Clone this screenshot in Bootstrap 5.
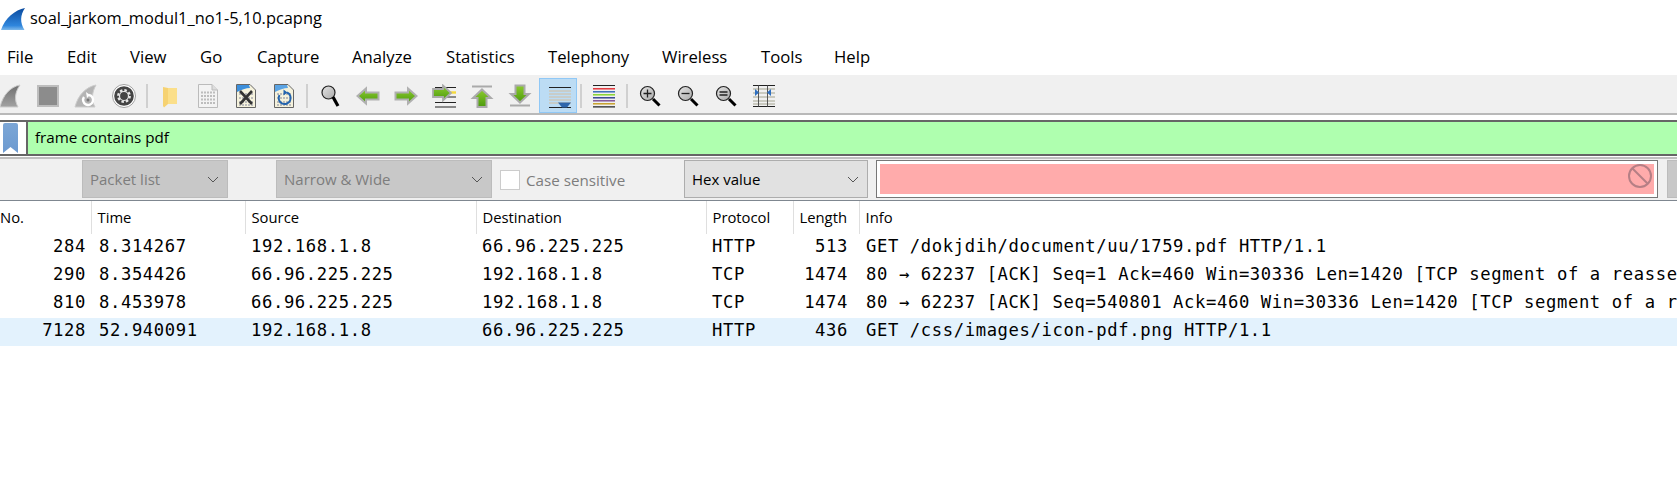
<!DOCTYPE html>
<html lang="en">
<head>
  <meta charset="UTF-8">
  <title>soal_jarkom_modul1_no1-5,10.pcapng</title>
  <meta name="viewport" content="width=device-width, initial-scale=1" />
  <link href="https://cdn.jsdelivr.net/npm/bootstrap@5.3.0/dist/css/bootstrap.min.css" rel="stylesheet">
  <style>
    html, body { height: 100%; }
    body { background: #fff; overflow: hidden; font-family: "Open Sans", "Liberation Sans", sans-serif; color: #000; }
    .ws-title { height: 37px; font-size: 16.4px; }
    .ws-title svg { margin-left: 1px; margin-right: 5px; }
    .ws-menu { height: 38px; font-size: 16.7px; padding: 2px 0 0 7px; }
    .ws-menu span { white-space: nowrap; }
    .ws-menu span:nth-child(1) { width: 60px; }
    .ws-menu span:nth-child(2) { width: 63px; }
    .ws-menu span:nth-child(3) { width: 70px; }
    .ws-menu span:nth-child(4) { width: 57px; }
    .ws-menu span:nth-child(5) { width: 95px; }
    .ws-menu span:nth-child(6) { width: 94px; }
    .ws-menu span:nth-child(7) { width: 102px; }
    .ws-menu span:nth-child(8) { width: 114px; }
    .ws-menu span:nth-child(9) { width: 99px; }
    .ws-menu span:nth-child(10) { width: 73px; }
    .ws-tools { height: 40px; padding-top: 3px; background: #f0f0f0; border-bottom: 2px solid #b9b9b9; margin-left: -9px; }
    .ws-tool { width: 38px; height: 35px; flex: none; }
    .ws-tool-on { background: #bcdcf4; border: 1px solid #90c8f6; }
    .ws-sep { width: 8px; flex: none; }
    .ws-sep::before { content: ""; width: 2px; height: 24px; background: #d0d0d0; display: block; margin: 0 auto; }
    .ws-filter { margin-top: 5px; height: 36px; border-top: 2px solid #666; border-bottom: 2px solid #666; }
    .ws-mark { width: 28px; flex: none; background: #fff; border-right: 2px solid #666; padding-left: 2px; }
    .ws-filter-text { background: #afffaf; padding: 0 0 1px 7px; font-size: 15.2px; }
    .ws-find { height: 44px; margin-top: 1px; padding: 1px 0 0 82px; background: #f0f0f0; border-top: 2px solid #c0c0c0; border-bottom: 1px solid #7f8790; font-size: 15.2px; overflow: hidden; }
    .ws-find .form-select { height: 38px; padding: 0 24px 0 7px; font-size: 15px; border-radius: 0; border: 1px solid #adadad; background-color: #e1e1e1; color: #000; font-family: inherit; flex: none; background-size: 12px 12px; background-position: right 8px center;
      background-image: url("data:image/svg+xml,%3csvg xmlns='http://www.w3.org/2000/svg' viewBox='0 0 12 12'%3e%3cpath fill='none' stroke='%23555' d='M1 4l5 5 5-5'/%3e%3c/svg%3e"); }
    .ws-find .form-select:disabled { background-color: #c8c8c8; color: #7d7d7d; border-color: #bcbcbc; opacity: 1; }
    .ws-pick-list { width: 146px; margin-right: 48px; }
    .ws-pick-match { width: 216px; }
    .ws-pick-hex { width: 184px; }
    .ws-check { width: 20px; height: 20px; margin: 0 6px 0 8px; border-radius: 0 !important; border: 1px solid #ccc; opacity: 1 !important; flex: none; }
    .ws-case { color: #7d7d7d; width: 158px; flex: none; }
    .ws-search { width: 782px; flex: none; margin: 0 9px 0 8px; height: 38px; padding: 3px; background: #fff; border: 1px solid #777; }
    .ws-search-in { background: #ffabab; height: 30px; padding-right: 2px; }
    .ws-find-btn { width: 40px; height: 38px; flex: none; background: #c8c8c8; border: 1px solid #bcbcbc; }
    .ws-packets { table-layout: fixed; width: 1677px; margin: 0; }
    .ws-packets th, .ws-packets td { padding: 0; border: 0; white-space: nowrap; overflow: hidden; color: #000; box-shadow: none; }
    .ws-packets th { height: 33px; font-weight: 400; font-size: 14.8px; padding-left: 6px; border-right: 1px solid #dfdfdf; vertical-align: middle; }
    .ws-packets th:first-child { padding-left: 0; }
    .ws-packets th:nth-child(1) { width: 91px; }
    .ws-packets th:nth-child(2) { width: 154px; }
    .ws-packets th:nth-child(3) { width: 231px; }
    .ws-packets th:nth-child(4) { width: 230px; }
    .ws-packets th:nth-child(5) { width: 87px; }
    .ws-packets th:nth-child(6) { width: 66px; }
    .ws-packets td { height: 28px; padding: 0 0 3px 6px; font-family: "DejaVu Sans Mono", "Liberation Mono", monospace; font-size: 17.2px; line-height: 1.25; letter-spacing: .62px; vertical-align: middle; }
    .ws-packets td:nth-child(2) { padding-left: 8px; }
    .ws-packets td:nth-child(7) { padding-left: 7px; }
    .ws-packets td.ws-num { text-align: right; padding: 0 5px 3px 0; }
    .ws-packets td.ws-len { text-align: right; padding: 0 11px 3px 0; }
    .ws-packets tr.ws-sel td { background: #e3f2fd; }
  </style>
</head>
<body>
  <svg width="0" height="0" class="position-absolute">
    <defs>
      <linearGradient id="gBlue" x1="0" y1="0" x2="0" y2="1"><stop offset="0" stop-color="#0a4a9e"/><stop offset=".8" stop-color="#2f86dd"/><stop offset="1" stop-color="#7db8ea"/></linearGradient>
      <linearGradient id="gGrey" x1="0" y1="0" x2="0" y2="1"><stop offset="0" stop-color="#6f6f6f"/><stop offset="1" stop-color="#a2a2a2"/></linearGradient>
      <linearGradient id="gGreen" x1="0" y1="0" x2="0" y2="1"><stop offset="0" stop-color="#8ccb2e"/><stop offset="1" stop-color="#4b9a0c"/></linearGradient>
      <linearGradient id="gLens" x1="0" y1="0" x2="1" y2="1"><stop offset="0" stop-color="#e4e4e4"/><stop offset="1" stop-color="#aaa"/></linearGradient>
      <linearGradient id="gMark" x1="0" y1="0" x2="0" y2="1"><stop offset="0" stop-color="#7ba6d6"/><stop offset="1" stop-color="#6d9ad0"/></linearGradient>
    </defs>
  </svg>

  <div class="ws-title d-flex align-items-center">
    <svg width="24" height="24" viewBox="0 0 24 24"><path d="M24 1C14 3 4 11 0 23H23.500C19 16 19 8 24 1Z" fill="url(#gBlue)"/></svg>
    <span>soal_jarkom_modul1_no1-5,10.pcapng</span>
  </div>

  <div class="ws-menu d-flex align-items-center">
    <span>File</span><span>Edit</span><span>View</span><span>Go</span><span>Capture</span><span>Analyze</span><span>Statistics</span><span>Telephony</span><span>Wireless</span><span>Tools</span><span>Help</span>
  </div>

  <div class="ws-tools d-flex">
    <div class="ws-tool d-flex align-items-center justify-content-center"><svg width="24" height="24" viewBox="0 0 24 24"><path d="M22 1C12 3 5 11 2 23H20C16 16 17 8 22 1Z" fill="url(#gGrey)" stroke="#ccc"/></svg></div>
    <div class="ws-tool d-flex align-items-center justify-content-center"><svg width="24" height="24" viewBox="0 0 24 24"><rect x="2" y="2" width="20" height="20" fill="#8c8c8c" stroke="#bdbdbd" stroke-width="2"/></svg></div>
    <div class="ws-tool d-flex align-items-center justify-content-center"><svg width="24" height="24" viewBox="0 0 24 24"><path d="M22 1C12 3 4 11 1 23H21C17 16 18 8 22 1Z" fill="#b4b4b4" stroke="#ccc"/><path d="M10 13a5 5 0 1 0 5-2" fill="none" stroke="#fff" stroke-width="2.400"/><path d="M12 8l4 3-3 3z" fill="#fff"/><circle cx="14" cy="16" r="1.500" fill="#777"/></svg></div>
    <div class="ws-tool d-flex align-items-center justify-content-center"><svg width="24" height="24" viewBox="0 0 24 24"><circle cx="12" cy="12" r="11.500" fill="#fff" stroke="#a0a0a0"/><circle cx="12" cy="12" r="9.800" fill="#444"/><circle cx="12" cy="12" r="5.800" fill="none" stroke="#e8e8e8" stroke-width="2.200" stroke-dasharray="2.500 2"/><circle cx="12" cy="12" r="4.500" fill="none" stroke="#e8e8e8" stroke-width="1.200"/></svg></div>
    <div class="ws-sep d-flex align-items-center"></div>
    <div class="ws-tool d-flex align-items-center justify-content-center"><svg width="24" height="24" viewBox="0 0 24 24"><path d="M9 4H19V20H9Z" fill="#fbdf8a"/><path d="M5 3L10 4V20L6 23.500L5 22Z" fill="#f6d272"/></svg></div>
    <div class="ws-tool d-flex align-items-center justify-content-center"><svg width="24" height="24" viewBox="0 0 24 24"><path d="M2.500 .5H16L21.500 6V23.500H2.500Z" fill="#f3f3f3" stroke="#bbb"/><path d="M16 .5V6H21.500" fill="#ddd" stroke="#bbb"/><path d="M5 8.500H19M5 12H19M5 15.500H19M5 19H19" stroke="#bdbdbd" stroke-width="2" stroke-dasharray="2 1"/></svg></div>
    <div class="ws-tool d-flex align-items-center justify-content-center"><svg width="24" height="24" viewBox="0 0 24 24"><path d="M2.500 .5H16L21.500 6V23.500H2.500Z" fill="#f5f2dc" stroke="#666"/><path d="M3 1H15L16 4C12 4 7 6 3 8Z" fill="#3c8fdc"/><path d="M5 10H19M5 14H19M5 18H19M5 21H19" stroke="#bbb" stroke-width="2" stroke-dasharray="2 1"/><path d="M6 7L18 20M18 7L6 20" stroke="#333" stroke-width="2.600"/></svg></div>
    <div class="ws-tool d-flex align-items-center justify-content-center"><svg width="24" height="24" viewBox="0 0 24 24"><path d="M2.500 .5H16L21.500 6V23.500H2.500Z" fill="#f5f2dc" stroke="#666"/><path d="M3 1H15L16 4C12 4 7 6 3 8Z" fill="#5ba4e4"/><path d="M5 10H19M5 14H19M5 18H19M5 21H19" stroke="#bbb" stroke-width="2" stroke-dasharray="2 1"/><path d="M15 8.500A6 6 0 1 1 7.500 11" fill="none" stroke="#2464ae" stroke-width="2"/><path d="M11.500 5.500L15.500 8.500 11.500 11.500Z" fill="#2464ae"/></svg></div>
    <div class="ws-sep d-flex align-items-center"></div>
    <div class="ws-tool d-flex align-items-center justify-content-center"><svg width="24" height="24" viewBox="0 0 24 24"><circle cx="10.500" cy="8.500" r="6.500" fill="url(#gLens)" stroke="#222" stroke-width="1.200"/><path d="M15 13L20 22" stroke="#000" stroke-width="3.200"/></svg></div>
    <div class="ws-tool d-flex align-items-center justify-content-center"><svg width="24" height="24" viewBox="0 0 24 24"><path d="M1.500 12L10 4.500V8.500H22.500V15.500H10V19.500Z" fill="url(#gGreen)" stroke="#b0b0b0" stroke-width="2"/></svg></div>
    <div class="ws-tool d-flex align-items-center justify-content-center"><svg width="24" height="24" viewBox="0 0 24 24"><path d="M22.500 12L14 4.500V8.500H1.500V15.500H14V19.500Z" fill="url(#gGreen)" stroke="#b0b0b0" stroke-width="2"/></svg></div>
    <div class="ws-tool d-flex align-items-center justify-content-center"><svg width="24" height="24" viewBox="0 0 24 24"><path d="M3 3.500H24M3 13H24M3 18.500H24M3 23H24" stroke="#222" stroke-width="1.200"/><path d="M16 8.500H24" stroke="#f5d93a" stroke-width="2.400"/><path d="M19 9L11 1.500V5H1V13H11V16.500Z" fill="url(#gGreen)" stroke="#aaa" stroke-width="1.800"/></svg></div>
    <div class="ws-tool d-flex align-items-center justify-content-center"><svg width="24" height="24" viewBox="0 0 24 24"><path d="M2 2.500H22" stroke="#aaa" stroke-width="2"/><path d="M12 5.500L21 14H16.500V23H7.500V14H3Z" fill="url(#gGreen)" stroke="#aaa" stroke-width="2"/></svg></div>
    <div class="ws-tool d-flex align-items-center justify-content-center"><svg width="24" height="24" viewBox="0 0 24 24"><path d="M2 21.500H22" stroke="#aaa" stroke-width="2"/><path d="M12 18.500L21 10H16.500V1.500H7.500V10H3Z" fill="url(#gGreen)" stroke="#aaa" stroke-width="2"/></svg></div>
    <div class="ws-tool ws-tool-on d-flex align-items-center justify-content-center"><svg width="26" height="24" viewBox="0 0 26 24"><path d="M4 7H26M4 10H26M4 13H26M4 16H26M4 19H26" stroke="#cbc8ba" stroke-width="1.500"/><path d="M4 3.500H26M4 23.500H26" stroke="#222" stroke-width="1.200"/><path d="M13 18.500H26L22 23.500H17Z" fill="#2f66ab"/></svg></div>
    <div class="ws-sep d-flex align-items-center"></div>
    <div class="ws-tool d-flex align-items-center justify-content-center"><svg width="24" height="24" viewBox="0 0 24 24"><path d="M1 1.500H23M1 22.800H23" stroke="#222" stroke-width="1.200"/><path d="M1 4.800H23" stroke="#e0262c" stroke-width="1.400"/><path d="M1 7.800H23" stroke="#2c63b4" stroke-width="1.400"/><path d="M1 10.800H23" stroke="#7ed321" stroke-width="1.400"/><path d="M1 13.800H23" stroke="#2a3a8c" stroke-width="1.400"/><path d="M1 16.800H23" stroke="#7a4a90" stroke-width="1.400"/><path d="M1 19.800H23" stroke="#c49a1a" stroke-width="1.400"/></svg></div>
    <div class="ws-sep d-flex align-items-center"></div>
    <div class="ws-tool d-flex align-items-center justify-content-center"><svg width="24" height="24" viewBox="0 0 24 24"><circle cx="9.500" cy="9.500" r="7" fill="url(#gLens)" stroke="#222" stroke-width="1.200"/><path d="M15 15L21.500 21.500" stroke="#000" stroke-width="3"/><path d="M5.500 9.500H13.500M9.500 5.500V13.500" stroke="#222" stroke-width="1.300"/></svg></div>
    <div class="ws-tool d-flex align-items-center justify-content-center"><svg width="24" height="24" viewBox="0 0 24 24"><circle cx="9.500" cy="9.500" r="7" fill="url(#gLens)" stroke="#222" stroke-width="1.200"/><path d="M15 15L21.500 21.500" stroke="#000" stroke-width="3"/><path d="M5.500 9.500H13.500" stroke="#222" stroke-width="1.300"/></svg></div>
    <div class="ws-tool d-flex align-items-center justify-content-center"><svg width="24" height="24" viewBox="0 0 24 24"><circle cx="9.500" cy="9.500" r="7" fill="url(#gLens)" stroke="#222" stroke-width="1.200"/><path d="M15 15L21.500 21.500" stroke="#000" stroke-width="3"/><path d="M5.500 8H13.500M5.500 11H13.500" stroke="#222" stroke-width="1.300"/></svg></div>
    <div class="ws-tool d-flex align-items-center justify-content-center"><svg width="24" height="24" viewBox="0 0 24 24"><path d="M1 5H23M1 9H23M1 13H23M1 17H23M1 20H23" stroke="#bdbdb0" stroke-width="1.300"/><path d="M1 1.500H23M1 22.500H23" stroke="#222"/><path d="M6.500 1.500V22.500M15.500 1.500V22.500" stroke="#555"/><path d="M3 5L7 8.500 3 12ZM19 5L15 8.500 19 12Z" fill="#2f6fc0"/></svg></div>
  </div>

  <div class="ws-filter d-flex">
    <div class="ws-mark d-flex align-items-center"><svg width="17" height="30" viewBox="0 0 17 30"><path d="M1 2Q1 0 3 0H14Q16 0 16 2V30L8.500 24 1 30Z" fill="url(#gMark)"/></svg></div>
    <div class="ws-filter-text flex-grow-1 d-flex align-items-center">frame contains pdf</div>
  </div>

  <div class="ws-find d-flex">
    <select class="form-select ws-pick-list" disabled><option>Packet list</option></select>
    <select class="form-select ws-pick-match" disabled><option>Narrow &amp; Wide</option></select>
    <div class="d-flex align-items-center">
      <input class="form-check-input ws-check mt-0" type="checkbox" disabled>
      <span class="ws-case">Case sensitive</span>
    </div>
    <select class="form-select ws-pick-hex"><option>Hex value</option></select>
    <div class="ws-search">
      <div class="ws-search-in d-flex justify-content-end">
        <svg width="24" height="24" viewBox="0 0 24 24"><circle cx="12" cy="12" r="11" fill="none" stroke="#b57f85" stroke-width="2"/><path d="M4.500 4.500L19.500 19.500" stroke="#b57f85" stroke-width="2"/></svg>
      </div>
    </div>
    <div class="ws-find-btn"></div>
  </div>

  <table class="table ws-packets">
    <thead>
      <tr><th>No.</th><th>Time</th><th>Source</th><th>Destination</th><th>Protocol</th><th>Length</th><th class="border-0">Info</th></tr>
    </thead>
    <tbody class="border-0">
      <tr><td class="ws-num">284</td><td>8.314267</td><td>192.168.1.8</td><td>66.96.225.225</td><td>HTTP</td><td class="ws-len">513</td><td>GET /dokjdih/document/uu/1759.pdf HTTP/1.1</td></tr>
      <tr><td class="ws-num">290</td><td>8.354426</td><td>66.96.225.225</td><td>192.168.1.8</td><td>TCP</td><td class="ws-len">1474</td><td>80 → 62237 [ACK] Seq=1 Ack=460 Win=30336 Len=1420 [TCP segment of a reassembled PDU]</td></tr>
      <tr><td class="ws-num">810</td><td>8.453978</td><td>66.96.225.225</td><td>192.168.1.8</td><td>TCP</td><td class="ws-len">1474</td><td>80 → 62237 [ACK] Seq=540801 Ack=460 Win=30336 Len=1420 [TCP segment of a reassembled PDU]</td></tr>
      <tr class="ws-sel"><td class="ws-num">7128</td><td>52.940091</td><td>192.168.1.8</td><td>66.96.225.225</td><td>HTTP</td><td class="ws-len">436</td><td>GET /css/images/icon-pdf.png HTTP/1.1</td></tr>
    </tbody>
  </table>

  <script src="https://cdn.jsdelivr.net/npm/bootstrap@5.3.0/dist/js/bootstrap.bundle.min.js"></script>
</body>
</html>
